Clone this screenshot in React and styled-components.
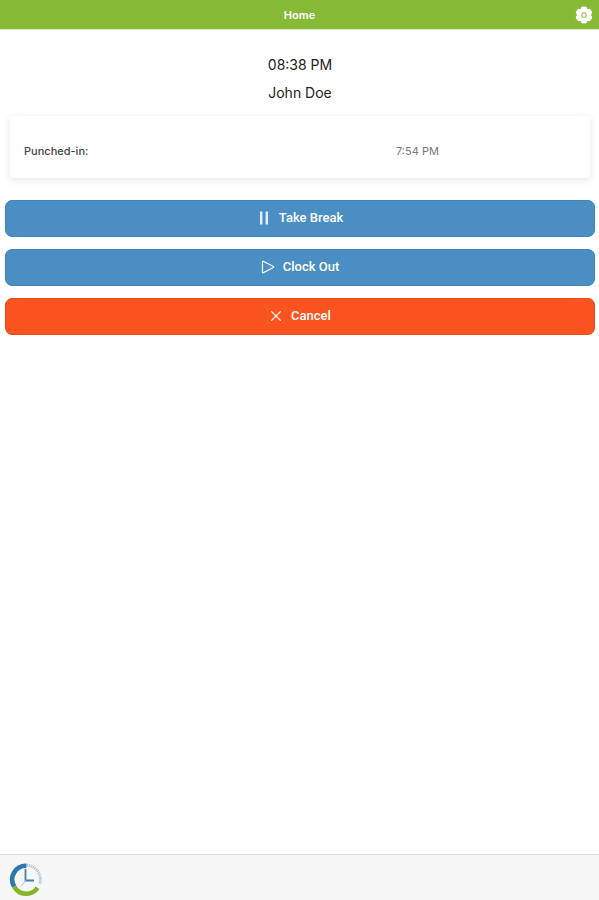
import styled, { createGlobalStyle } from "styled-components";

const App = () => {
  return (
    <>
      <GlobalStyle />
      <Page>
        <Header>
          <Title>Home</Title>
          <SettingsButton type="button" aria-label="Settings">
            <GearIcon />
          </SettingsButton>
        </Header>
        <Content>
          <Greeting>
            <GreetingLine>08:38 PM</GreetingLine>
            <GreetingLine>John Doe</GreetingLine>
          </Greeting>
          <Card>
            <PunchLabel>Punched-in:</PunchLabel>
            <PunchTime>7:54 PM</PunchTime>
          </Card>
          <Actions>
            <ActionButton type="button">
              <PauseIcon />
              Take Break
            </ActionButton>
            <ActionButton type="button">
              <PlayIcon />
              Clock Out
            </ActionButton>
            <ActionButton type="button" $danger>
              <CloseIcon />
              Cancel
            </ActionButton>
          </Actions>
        </Content>
        <Footer>
          <Logo />
        </Footer>
      </Page>
    </>
  );
}

const GearIcon = () => (
  <svg width="18" height="18" viewBox="0 0 18 18">
    <g fill="#fff">
      <circle cx="9" cy="9" r="7.2" />
      {[0, 60, 120].map(angle => (
        <rect key={angle} x="6" y="0.5" width="6" height="17" rx="1.8" transform={`rotate(${angle} 9 9)`} />
      ))}
    </g>
    <circle cx="9" cy="9" r="2.3" fill="none" stroke="#a3c968" strokeWidth="1.2" />
  </svg>
);

const PauseIcon = () => (
  <svg width="14" height="14" viewBox="0 0 14 14" fill="#e4eef6">
    <rect x="3" y="0.5" width="2.4" height="13" />
    <rect x="8.6" y="0.5" width="2.4" height="13" />
  </svg>
);

const PlayIcon = () => (
  <svg width="14" height="14" viewBox="0 0 14 14" fill="none" stroke="#fff" strokeWidth="1.2" strokeLinejoin="round">
    <path d="M1.5 1.6v10.8q0 .7.7.4L12.4 7.5q.6-.5 0-1L2.2 1.2q-.7-.3-.7.4z" />
  </svg>
);

const CloseIcon = () => (
  <svg width="14" height="14" viewBox="0 0 14 14" fill="none" stroke="#fff" strokeWidth="1.2" strokeLinecap="round">
    <path d="M2.6 2.6l8.8 8.8M11.4 2.6L2.6 11.4" />
  </svg>
);

const Logo = () => (
  <svg width="34" height="34" viewBox="0 0 34 34" fill="none">
    <path d="M17.5 2.8A13.7 13.7 0 0 0 5.2 23.6" stroke="#2d77ac" strokeWidth="4.6" />
    <path d="M5.2 23.6a13.7 13.7 0 0 0 23.4 1.2" stroke="#83b727" strokeWidth="4.6" />
    <path d="M18 2.2A14.6 14.6 0 0 1 30.6 21.5" stroke="#a9c4d9" strokeWidth="3" strokeDasharray="1.2 0.8" />
    <path d="M16.5 6V17.5H25" stroke="#3f82b4" strokeWidth="1.8" />
    <path d="M16.5 17.5l-4.5 6" stroke="#a9c4d9" strokeWidth="1" />
  </svg>
);

const GlobalStyle = createGlobalStyle`
  * {
    box-sizing: border-box;
  }
  body {
    margin: 0;
    background: #fff;
    font-family: Inter, "Liberation Sans", sans-serif;
  }
`;

const Page = styled.div`
  min-height: 100vh;
  display: flex;
  flex-direction: column;
`;

const Header = styled.header`
  height: 30px;
  display: grid;
  grid-template-columns: 1fr auto 1fr;
  align-items: center;
  padding: 0 6px;
  background: #86b936;
  border-bottom: 1px solid #dbe9c3;
`;

const Title = styled.h1`
  grid-column: 2;
  margin: 0;
  color: #fff;
  font-size: 11px;
  font-weight: 600;
`;

const SettingsButton = styled.button`
  justify-self: end;
  display: flex;
  padding: 0;
  border: none;
  background: none;
  cursor: pointer;
`;

const Content = styled.main`
  flex: 1;
  padding: 21px 4px 21px 5px;
`;

const Greeting = styled.div`
  text-align: center;
`;

const GreetingLine = styled.p`
  margin: 0;
  color: #222;
  font-size: 14px;
  line-height: 28px;
`;

const Card = styled.section`
  display: grid;
  grid-template-columns: 2fr 1fr;
  align-items: center;
  margin: 9px 5px 22px;
  padding: 26px 8px 18px 14px;
  border-radius: 4px;
  font-size: 11px;
  line-height: 18px;
  box-shadow: 0 2px 8px rgba(0, 0, 0, 0.1);
`;

const PunchLabel = styled.span`
  color: #444;
  font-weight: 500;
`;

const PunchTime = styled.span`
  color: #777;
`;

const Actions = styled.div`
  display: flex;
  flex-direction: column;
  gap: 12px;
`;

const ActionButton = styled.button`
  display: flex;
  align-items: center;
  justify-content: center;
  gap: 8px;
  height: 37px;
  padding: 0 0 2px;
  border: 1px solid ${({ $danger }) => $danger ? "#ee4a1b" : "#3d86be"};
  border-radius: 7px;
  background: ${({ $danger }) => $danger ? "#f9531f" : "#4a8ec4"};
  color: #fff;
  font-family: Roboto, "Liberation Sans", sans-serif;
  font-size: 13px;
  font-weight: 500;
  cursor: pointer;
`;

const Footer = styled.footer`
  height: 46px;
  display: flex;
  align-items: center;
  padding: 4px 9px 0;
  border-top: 1px solid #dedede;
  background: #f7f7f7;
`;

export default App;
